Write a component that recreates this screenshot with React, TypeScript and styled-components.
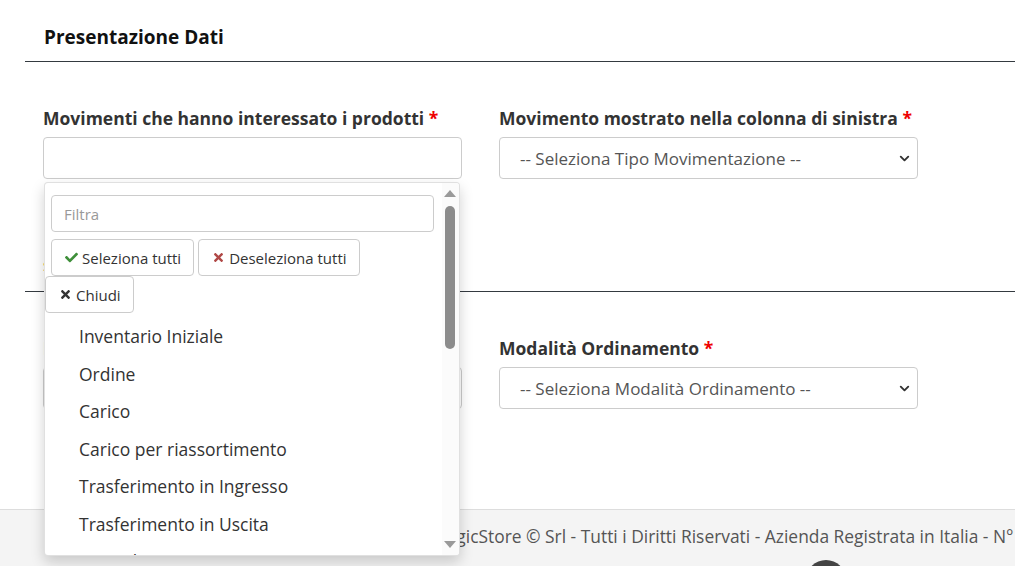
import styled, { createGlobalStyle } from 'styled-components';
import { FaCheck, FaTimes } from 'react-icons/fa';
import { ChevronDown } from 'lucide-react';

const GlobalStyle = createGlobalStyle`
  html, body {
    margin: 0;
    padding: 0;
    background: #ffffff;
  }
  body {
    font-family: "Open Sans", "Liberation Sans", sans-serif;
    color: #333333;
    overflow: hidden;
  }
  * {
    box-sizing: border-box;
  }
`;

const Page = styled.div`
  min-height: 100vh;
  display: flex;
  flex-direction: column;
`;

const Content = styled.div`
  padding-left: 25px;
`;

const SectionHeader = styled.h4`
  margin: 0;
  padding: 24px 0 11px 19px;
  font-size: 19px;
  line-height: 26px;
  font-weight: 700;
  color: #111111;
  border-bottom: 1px solid #343a40;
`;

const FormRow = styled.div<{ $top: number; $bottom: number; $divider?: boolean }>`
  display: grid;
  grid-template-columns: 419px 419px;
  column-gap: 37px;
  align-items: start;
  padding: ${p => p.$top}px 0 ${p => p.$bottom}px 18px;
  border-bottom: ${p => (p.$divider ? '1px solid #343a40' : 'none')};
`;

const Field = styled.div`
  position: relative;
`;

const Label = styled.label`
  display: block;
  margin-bottom: 7px;
  font-size: 17.5px;
  line-height: 24px;
  font-weight: 700;
  color: #333333;
  white-space: nowrap;
`;

const Required = styled.span`
  color: #ee0000;
`;

const InputWrap = styled.div`
  position: relative;
`;

const TextInput = styled.div`
  height: 42px;
  border: 1px solid #cccccc;
  border-radius: 4px;
  background: #ffffff;
`;

const SelectBox = styled.div`
  height: 42px;
  display: flex;
  align-items: center;
  justify-content: space-between;
  padding: 0 5px 0 20px;
  border: 1px solid #cccccc;
  border-radius: 4px;
  background: #ffffff;
  font-size: 17px;
  color: #555555;
  white-space: nowrap;
`;

const HelpText = styled.div`
  margin-top: 78px;
  font-size: 13px;
  line-height: 18px;
  color: #e8830c;
`;

const Dropdown = styled.div`
  position: absolute;
  top: calc(100% + 3px);
  left: 1px;
  z-index: 10;
  width: 416px;
  height: 374px;
  display: flex;
  background: #ffffff;
  border: 1px solid rgba(0, 0, 0, 0.12);
  border-radius: 4px;
  box-shadow: 0 6px 14px rgba(0, 0, 0, 0.18);
  overflow: hidden;
`;

const DropdownBody = styled.div`
  flex: 1;
  min-width: 0;
  padding: 12px 8px 0 6px;
  overflow: hidden;
`;

const FilterInput = styled.input`
  display: block;
  width: 100%;
  height: 37px;
  padding: 0 12px;
  border: 1px solid #cccccc;
  border-radius: 4px;
  font-family: inherit;
  font-size: 15px;
  color: #555555;
  outline: none;
  &::placeholder {
    color: #999999;
  }
`;

const ButtonBar = styled.div<{ $shift?: number; $top?: number }>`
  display: flex;
  flex-wrap: wrap;
  gap: 4px;
  margin-top: ${p => p.$top ?? 0}px;
  margin-left: ${p => p.$shift ?? 0}px;
`;

const ToolButton = styled.button`
  height: 37px;
  display: inline-flex;
  align-items: center;
  gap: 4px;
  padding: 0 12px 0 13px;
  border: 1px solid #cccccc;
  border-radius: 4px;
  background: #ffffff;
  font-family: inherit;
  font-size: 15px;
  color: #333333;
`;

const IconTint = styled.span<{ $color: string }>`
  display: inline-flex;
  color: ${p => p.$color};
  font-size: 13px;
`;

const OptionList = styled.ul`
  list-style: none;
  margin: 5px 0 0;
  padding: 0 0 0 28px;
`;

const OptionItem = styled.li`
  height: 37.5px;
  line-height: 37.5px;
  font-size: 17.5px;
  color: #333333;
  white-space: nowrap;
`;

const ScrollRail = styled.div`
  width: 17px;
  display: flex;
  flex-direction: column;
  align-items: center;
  padding: 7px 2px 7px 0;
  background: #fbfbfb;
`;

const RailArrow = styled.div<{ $down?: boolean }>`
  width: 0;
  height: 0;
  border-left: 6px solid transparent;
  border-right: 6px solid transparent;
  ${p => (p.$down ? 'border-top: 7px solid #9a9a9a;' : 'border-bottom: 7px solid #9a9a9a;')}
`;

const RailThumb = styled.div`
  width: 10px;
  height: 143px;
  margin-top: 9px;
  border-radius: 5px;
  background: #8c8c8c;
`;

const RailSpacer = styled.div`
  flex: 1;
`;

const Footer = styled.footer`
  position: relative;
  flex: 1;
  padding: 14px 0 0 431px;
  background: #f4f4f4;
  border-top: 1px solid #dddddd;
  font-size: 17.4px;
  line-height: 24px;
  color: #555555;
  white-space: nowrap;
  overflow: hidden;
`;

const FloatingButton = styled.div`
  position: absolute;
  left: 806px;
  top: 50px;
  width: 40px;
  height: 40px;
  border-radius: 50%;
  background: #444444;
`;

const movements = [
  'Inventario Iniziale',
  'Ordine',
  'Carico',
  'Carico per riassortimento',
  'Trasferimento in Ingresso',
  'Trasferimento in Uscita',
  'Reso al Fornitore',
  'Vendita',
];

export default function App() {
  return (
    <Page>
      <GlobalStyle />
      <Content>
        <SectionHeader>Presentazione Dati</SectionHeader>

        <FormRow $top={44} $bottom={16} $divider>
          <Field>
            <Label>
              Movimenti che hanno interessato i prodotti <Required>*</Required>
            </Label>
            <InputWrap>
              <TextInput />
              <Dropdown>
                <DropdownBody>
                  <FilterInput placeholder="Filtra" readOnly />
                  <ButtonBar $top={7}>
                    <ToolButton>
                      <IconTint $color="#3f8f3a">
                        <FaCheck />
                      </IconTint>
                      Seleziona tutti
                    </ToolButton>
                    <ToolButton>
                      <IconTint $color="#b04846">
                        <FaTimes />
                      </IconTint>
                      Deseleziona tutti
                    </ToolButton>
                  </ButtonBar>
                  <ButtonBar $shift={-6}>
                    <ToolButton>
                      <IconTint $color="#333333">
                        <FaTimes />
                      </IconTint>
                      Chiudi
                    </ToolButton>
                  </ButtonBar>
                  <OptionList>
                    {movements.map(m => (
                      <OptionItem key={m}>{m}</OptionItem>
                    ))}
                  </OptionList>
                </DropdownBody>
                <ScrollRail>
                  <RailArrow />
                  <RailThumb />
                  <RailSpacer />
                  <RailArrow $down />
                </ScrollRail>
              </Dropdown>
            </InputWrap>
            <HelpText>Seleziona almeno un movimento</HelpText>
          </Field>
          <Field>
            <Label>
              Movimento mostrato nella colonna di sinistra <Required>*</Required>
            </Label>
            <SelectBox>
              -- Seleziona Tipo Movimentazione --
              <ChevronDown size={15} strokeWidth={3} color="#333" />
            </SelectBox>
          </Field>
        </FormRow>

        <FormRow $top={44} $bottom={100}>
          <Field>
            <Label>
              Raggruppamento Prodotti <Required>*</Required>
            </Label>
            <SelectBox>
              -- Seleziona Raggruppamento --
              <ChevronDown size={15} strokeWidth={3} color="#333" />
            </SelectBox>
          </Field>
          <Field>
            <Label>
              Modalità Ordinamento <Required>*</Required>
            </Label>
            <SelectBox>
              -- Seleziona Modalità Ordinamento --
              <ChevronDown size={15} strokeWidth={3} color="#333" />
            </SelectBox>
          </Field>
        </FormRow>
      </Content>

      <Footer>
        MagicStore © Srl - Tutti i Diritti Riservati - Azienda Registrata in Italia - N° REA MI-1234567 - P.IVA 01234567890
        <FloatingButton />
      </Footer>
    </Page>
  );
}
